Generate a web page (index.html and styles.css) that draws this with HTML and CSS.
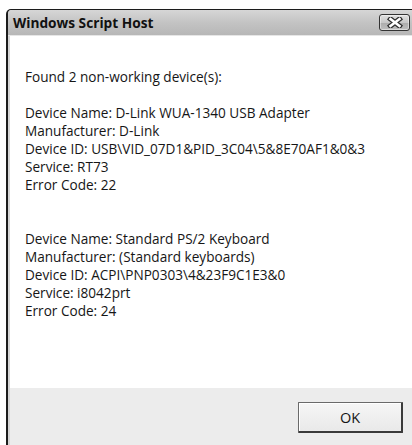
FILE: index.html
```html
<!DOCTYPE html>
<html>
<head>
<meta charset="utf-8">
<title>Windows Script Host</title>
<link rel="stylesheet" href="styles.css">
</head>
<body>
<div class="window">
  <div class="titlebar">
    <span class="title">Windows Script Host</span>
    <button class="close" aria-label="Close">
      <svg width="16" height="11" viewBox="0 0 16 11">
        <path d="M3.5 2 L12.5 9 M12.5 2 L3.5 9" stroke="#2e2e2e" stroke-width="5" stroke-linecap="square"/>
        <path d="M3.5 2 L12.5 9 M12.5 2 L3.5 9" stroke="#ffffff" stroke-width="2.6" stroke-linecap="square"/>
      </svg>
    </button>
  </div>
  <div class="client">
    <div class="message">
      <p>Found 2 non-working device(s):</p>
      <p>Device Name: D-Link WUA-1340 USB Adapter<br>
      Manufacturer: D-Link<br>
      Device ID: USB\VID_07D1&amp;PID_3C04\5&amp;8E70AF1&amp;0&amp;3<br>
      Service: RT73<br>
      Error Code: 22</p>
      <p class="gap">Device Name: Standard PS/2 Keyboard<br>
      Manufacturer: (Standard keyboards)<br>
      Device ID: ACPI\PNP0303\4&amp;23F9C1E3&amp;0<br>
      Service: i8042prt<br>
      Error Code: 24</p>
    </div>
    <div class="footer">
      <button class="ok">OK</button>
    </div>
  </div>
</div>
</body>
</html>
```
FILE: styles.css
```css
html, body {
  margin: 0;
  padding: 0;
  background: #ffffff;
  height: 445px;
  overflow: hidden;
}

.window {
  margin: 9px 0 0 6px;
  height: 436px;
  display: flex;
  flex-direction: column;
  border-top: 1px solid #1c1c1c;
  border-left: 2px solid #1c1c1c;
  border-top-left-radius: 5px;
  background: #d6d6d6;
  font-family: "Open Sans", "Noto Sans", sans-serif;
  color: #161616;
}

.titlebar {
  height: 25px;
  flex: none;
  display: flex;
  align-items: center;
  justify-content: space-between;
  padding: 0 0 0 5px;
  background: linear-gradient(#d6d6d6, #c2c2c2 55%, #b7b7b7);
  border-bottom: 1px solid #e6e6e6;
  border-top-left-radius: 4px;
}

.title {
  font-weight: 700;
  font-size: 13.7px;
  color: #111;
}

.close {
  width: 31px;
  height: 17px;
  margin: 0 2px 0 0;
  padding: 0;
  display: flex;
  align-items: center;
  justify-content: center;
  border: 1px solid #333333;
  border-radius: 3px;
  background: linear-gradient(#e0e0e0, #c8c8c8 50%, #acacac 51%, #bebebe);
  box-shadow: inset 0 0 0 1px rgba(255,255,255,0.45);
}

.client {
  flex: 1;
  display: flex;
  flex-direction: column;
  margin-left: 2px;
  background: #ffffff;
}

.message {
  flex: 1;
  padding: 32px 0 0 15px;
  font-size: 13.6px;
  line-height: 18px;
}

.message p {
  margin: 0 0 18px;
}

.message p.gap {
  margin-top: 36px;
}

.footer {
  height: 58px;
  flex: none;
  display: flex;
  justify-content: flex-end;
  align-items: flex-start;
  padding: 14px 9px 0 0;
  box-sizing: border-box;
  background: #ececec;
}

.ok {
  width: 105px;
  height: 31px;
  padding: 0;
  font-family: "Open Sans", "Noto Sans", sans-serif;
  font-size: 14.5px;
  color: #151515;
  background: linear-gradient(#f6f6f6, #e9e9e9);
  border-style: solid;
  border-color: #6a6a6a #3a3a3a #3a3a3a #6a6a6a;
  border-width: 1px 2px 2px 1px;
  border-radius: 1px;
  box-shadow: inset 1px 1px 0 #ffffff;
}
```
